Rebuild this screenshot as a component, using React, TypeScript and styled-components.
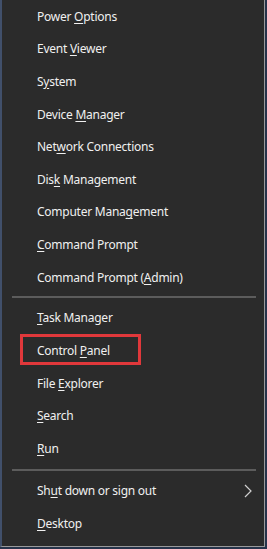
import React from "react";
import styled, { createGlobalStyle } from "styled-components";

const Global = createGlobalStyle`
  html, body { margin: 0; padding: 0; }
  body {
    width: 267px;
    height: 549px;
    overflow: hidden;
    background: #26334a;
  }
`;

const Menu = styled.div`
  box-sizing: border-box;
  width: 265px;
  height: 547px;
  background: #2b2b2b;
  border-left: 2px solid #41506b;
  border-right: 1px solid #9a9a9a;
  border-bottom: 1px solid #9a9a9a;
  display: flex;
  flex-direction: column;
  font-family: "Noto Sans", "Open Sans", sans-serif;
  font-size: 12px;
  letter-spacing: -0.25px;
  color: #f0f0f0;
`;

const Item = styled.div`
  position: relative;
  height: 32.6px;
  display: flex;
  align-items: center;
  padding-left: 35px;
  padding-right: 12px;
  white-space: nowrap;
`;

const Highlight = styled.div`
  position: absolute;
  left: 18px;
  top: 0px;
  width: 121px;
  height: 31px;
  box-sizing: border-box;
  border: 3px solid #e0383b;
  pointer-events: none;
`;

const Key = styled.span`
  text-decoration: underline;
  text-underline-offset: 2px;
  text-decoration-thickness: 1px;
`;

const Separator = styled.div<{ $space: number }>`
  height: ${(p) => p.$space}px;
  display: flex;
  align-items: center;
  padding: 0 8px 0 10px;
  &::after {
    content: "";
    flex: 1;
    height: 2px;
    background: #5c5c5c;
  }
`;

const Label = styled.span`
  flex: 1;
`;

const Chevron = styled.svg`
  width: 8px;
  height: 14px;
`;

type Entry = { pre: string; key: string; post: string; highlight?: boolean; sub?: boolean };

const e = (pre: string, key: string, post: string, extra: Partial<Entry> = {}): Entry => ({
  pre,
  key,
  post,
  ...extra,
});

const group1: Entry[] = [
  e("Power ", "O", "ptions"),
  e("Event ", "V", "iewer"),
  e("S", "y", "stem"),
  e("Device ", "M", "anager"),
  e("Net", "w", "ork Connections"),
  e("Dis", "k", " Management"),
  e("Computer Mana", "g", "ement"),
  e("", "C", "ommand Prompt"),
  e("Command Prompt (", "A", "dmin)"),
];

const group2: Entry[] = [
  e("", "T", "ask Manager"),
  e("Control ", "P", "anel", { highlight: true }),
  e("File ", "E", "xplorer"),
  e("", "S", "earch"),
  e("", "R", "un"),
];

const group3: Entry[] = [
  e("Sh", "u", "t down or sign out", { sub: true }),
  e("", "D", "esktop"),
];

const Row = ({ item }: { item: Entry }) => (
  <Item>
    <Label>
      {item.pre}
      <Key>{item.key}</Key>
      {item.post}
    </Label>
    {item.sub && (
      <Chevron viewBox="0 0 8 14">
        <path d="M1 1 L7 7 L1 13" fill="none" stroke="#d0d0d0" strokeWidth="1.2" />
      </Chevron>
    )}
    {item.highlight && <Highlight />}
  </Item>
);

export default function App() {
  return (
    <>
      <Global />
      <Menu>
        {group1.map((it) => (
          <Row key={it.pre + it.key} item={it} />
        ))}
        <Separator $space={8.3} />
        {group2.map((it) => (
          <Row key={it.pre + it.key} item={it} />
        ))}
        <Separator $space={10} />
        {group3.map((it) => (
          <Row key={it.pre + it.key} item={it} />
        ))}
      </Menu>
    </>
  );
}
